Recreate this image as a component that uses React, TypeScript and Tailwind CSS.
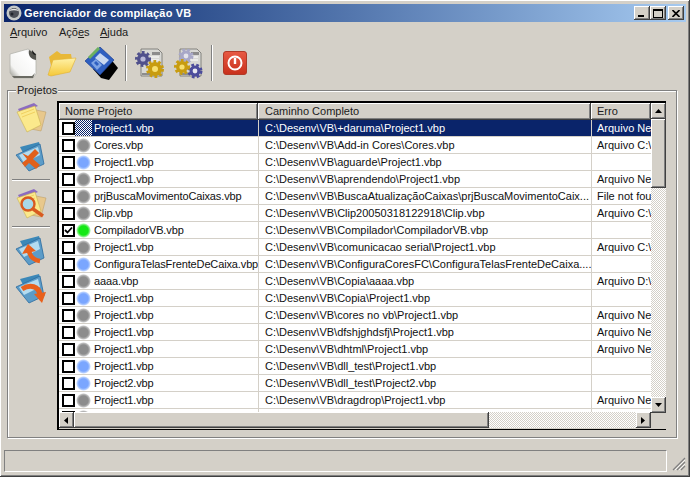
import { ReactNode } from "react";

const raised =
  "bg-[#d4d0c8] shadow-[inset_-1px_-1px_0_#404040,inset_1px_1px_0_#fff,inset_-2px_-2px_0_#808080]";
const dither =
  "bg-[repeating-conic-gradient(#d4d0c8_0_25%,#fff_0_50%)] bg-[length:2px_2px]";

type Dot = "gray" | "blue" | "green" | "sel";
type Row = { name: string; path: string; erro: string; dot: Dot; checked?: boolean };

const base = "C:\\Desenv\\VB\\";
const rows: Row[] = [
  { name: "Project1.vbp", path: base + "+daruma\\Project1.vbp", erro: "Arquivo Ne", dot: "sel" },
  { name: "Cores.vbp", path: base + "Add-in Cores\\Cores.vbp", erro: "Arquivo C:\\", dot: "gray" },
  { name: "Project1.vbp", path: base + "aguarde\\Project1.vbp", erro: "", dot: "blue" },
  { name: "Project1.vbp", path: base + "aprendendo\\Project1.vbp", erro: "Arquivo Ne", dot: "gray" },
  { name: "prjBuscaMovimentoCaixas.vbp", path: base + "BuscaAtualizaçãoCaixas\\prjBuscaMovimentoCaix...", erro: "File not fou", dot: "gray" },
  { name: "Clip.vbp", path: base + "Clip20050318122918\\Clip.vbp", erro: "Arquivo C:\\", dot: "gray" },
  { name: "CompiladorVB.vbp", path: base + "Compilador\\CompiladorVB.vbp", erro: "", dot: "green", checked: true },
  { name: "Project1.vbp", path: base + "comunicacao serial\\Project1.vbp", erro: "Arquivo C:\\", dot: "gray" },
  { name: "ConfiguraTelasFrenteDeCaixa.vbp", path: base + "ConfiguraCoresFC\\ConfiguraTelasFrenteDeCaixa....", erro: "", dot: "blue" },
  { name: "aaaa.vbp", path: base + "Copia\\aaaa.vbp", erro: "Arquivo D:\\", dot: "gray" },
  { name: "Project1.vbp", path: base + "Copia\\Project1.vbp", erro: "", dot: "blue" },
  { name: "Project1.vbp", path: base + "cores no vb\\Project1.vbp", erro: "Arquivo Ne", dot: "gray" },
  { name: "Project1.vbp", path: base + "dfshjghdsfj\\Project1.vbp", erro: "Arquivo Ne", dot: "gray" },
  { name: "Project1.vbp", path: base + "dhtml\\Project1.vbp", erro: "Arquivo Ne", dot: "gray" },
  { name: "Project1.vbp", path: base + "dll_test\\Project1.vbp", erro: "", dot: "blue" },
  { name: "Project2.vbp", path: base + "dll_test\\Project2.vbp", erro: "", dot: "blue" },
  { name: "Project1.vbp", path: base + "dragdrop\\Project1.vbp", erro: "Arquivo Ne", dot: "gray" },
  { name: "", path: "", erro: "", dot: "gray" },
];

function Gear({ x, y, r, color, hub }: { x: number; y: number; r: number; color: string; hub: string }) {
  return (
    <g>
      <circle cx={x} cy={y} r={r} fill="none" stroke={color} strokeWidth={3} strokeDasharray="2.6 2.2" />
      <circle cx={x} cy={y} r={r - 0.5} fill={color} />
      <circle cx={x} cy={y} r={r * 0.4} fill={hub} />
    </g>
  );
}

function DocIcon() {
  return (
    <svg width="30" height="32" viewBox="0 0 30 32" className="shrink-0">
      <defs>
        <linearGradient id="docg" x1="0" y1="1" x2="1" y2="0">
          <stop offset="0" stopColor="#8f8f86" />
          <stop offset="0.25" stopColor="#f4f4f2" />
          <stop offset="0.75" stopColor="#fff" />
          <stop offset="1" stopColor="#d8d8d8" />
        </linearGradient>
      </defs>
      <path d="M2 7 20 2l8 5v20l-3 4H6L2 26Z" fill="url(#docg)" stroke="#b4b4ac" strokeWidth="0.8" />
      <path d="M21 3c-1 5 1 9 7 10V7Z" fill="#55554f" />
      <path d="M24 3l4 5c-3 0-4-2-4-5Z" fill="#1c1c1c" />
      <path d="M4 29h20l3-3-2 5H6Z" fill="#6a6a62" />
    </svg>
  );
}

function FolderIcon() {
  return (
    <svg width="30" height="27" viewBox="0 0 30 27" className="shrink-0">
      <defs>
        <linearGradient id="foldg" x1="0" y1="0" x2="0" y2="1">
          <stop offset="0" stopColor="#fff2a8" />
          <stop offset="1" stopColor="#f5c838" />
        </linearGradient>
      </defs>
      <path d="M2 7 10 1l4 3 10 0 1 6L6 24Z" fill="#e8b838" />
      <path d="M1 25 6 10l23-2-6 14-19 4Z" fill="url(#foldg)" stroke="#e0b030" strokeWidth="0.6" />
    </svg>
  );
}

function SaveIcon() {
  return (
    <svg width="33" height="33" viewBox="0 0 33 33" className="shrink-0">
      <path d="M8 22 24 10l9 11-9 12-8-2Z" fill="#000" />
      <path d="M0 14 15 0l14 13-14 15Z" fill="#2f5fc0" stroke="#1c3f90" strokeWidth="0.7" />
      <path d="M14 1 4 11" stroke="#6cb060" strokeWidth="3" />
      <path d="M15 6 24 13l-5 5-9-7Z" fill="#c9d8f0" />
      <path d="M6 16l5-4 6 6-5 5Z" fill="#7fa4e4" />
      <path d="M9 16l2-2 3 3-2 2Z" fill="#2f5fc0" />
    </svg>
  );
}

function GearDocIcon({ flip }: { flip?: boolean }) {
  return (
    <svg width="31" height="32" viewBox="0 0 31 32" className="shrink-0">
      <path d="M7 2h17l4 4v23H7Z" fill="#d8d8d4" stroke="#6e6e6a" strokeWidth="0.8" />
      <path d="M18 5h8v3h-8ZM8 26h18v2H8Z" fill="#8c8c8c" />
      <path d="M16 10h9M16 13h9" stroke="#fff" />
      {flip ? (
        <>
          <Gear x={13} y={9} r={6} color="#a8a8c8" hub="#e4e4ec" />
          <Gear x={22} y={24} r={6} color="#4c4c9c" hub="#e8e8f0" />
          <Gear x={9} y={20} r={6.5} color="#c89c10" hub="#f8e070" />
        </>
      ) : (
        <>
          <Gear x={9} y={12} r={6.5} color="#50508c" hub="#b8b8d8" />
          <Gear x={21} y={22} r={7.5} color="#c89c10" hub="#f8e070" />
        </>
      )}
    </svg>
  );
}

function PowerIcon() {
  return (
    <svg width="24" height="24" viewBox="0 0 24 24" className="shrink-0">
      <defs>
        <linearGradient id="powg" x1="0" y1="0" x2="0" y2="1">
          <stop offset="0" stopColor="#e85a44" />
          <stop offset="1" stopColor="#c8301c" />
        </linearGradient>
      </defs>
      <rect x="0.5" y="0.5" width="23" height="23" rx="2.5" fill="url(#powg)" stroke="#b03a28" />
      <circle cx="12" cy="12" r="6.5" fill="none" stroke="#fff" strokeWidth="2" />
      <path d="M12 7v6" stroke="#fff" strokeWidth="2.4" />
    </svg>
  );
}

function Sheets({ children }: { children?: ReactNode }) {
  return (
    <svg width="32" height="30" viewBox="0 0 32 30" className="shrink-0 block">
      <path d="M16 6 31 9l-5 19-10-2Z" fill="#e8c88c" stroke="#b89860" strokeWidth="0.5" />
      <path d="M3 6 19 0l4 3-18 7Z" fill="#8c6cc0" />
      <path d="M2 9 20 3l6 19-14 7Z" fill="#fbe98c" stroke="#c8b050" strokeWidth="0.6" />
      <path d="M6 11 19 6M7 14 20 9" stroke="#f0d060" />
      {children}
    </svg>
  );
}

function BlueSheets({ children }: { children?: ReactNode }) {
  return (
    <svg width="32" height="30" viewBox="0 0 32 30" className="shrink-0 block">
      <path d="M5 5 24 0l4 18-12 8Z" fill="#3c88b8" />
      <path d="M1 13 25 2l4 20-15 7Z" fill="#5c9cc8" stroke="#2c6ca0" strokeWidth="0.8" />
      <path d="M4 13 23 5l2 8-16 8Z" fill="#b4dcf0" />
      {children}
    </svg>
  );
}

function TitleIcon() {
  return (
    <svg width="16" height="16" viewBox="0 0 16 16" className="shrink-0">
      <circle cx="8" cy="8" r="7.5" fill="#c4c8c8" />
      <circle cx="8" cy="8" r="5" fill="#4c5058" />
      <path d="M3 6c3-3 7-3 10 0-3-1-7-1-10 0Z" fill="#e8e8e8" />
      <circle cx="6" cy="9" r="1.5" fill="#20242c" />
    </svg>
  );
}

function Triangle({ dir }: { dir: "up" | "down" | "left" | "right" }) {
  const pts = {
    up: "0,4 7,4 3.5,0",
    down: "0,0 7,0 3.5,4",
    left: "4,0 4,7 0,3.5",
    right: "0,0 0,7 4,3.5",
  }[dir];
  return (
    <svg width="7" height="7" viewBox="0 0 7 7" className={dir === "up" || dir === "down" ? "translate-y-[1px]" : "translate-x-[1px]"}>
      <polygon points={pts} fill="#000" />
    </svg>
  );
}

function ScrollButton({ dir }: { dir: "up" | "down" | "left" | "right" }) {
  return (
    <div className={`${raised} w-[15px] h-[16px] shrink-0 flex items-center justify-center`}>
      <Triangle dir={dir} />
    </div>
  );
}

function CaptionButton({ children, className }: { children: ReactNode; className?: string }) {
  return (
    <div className={`${raised} w-[16px] h-[14px] flex items-center justify-center ${className ?? ""}`}>
      {children}
    </div>
  );
}

function StatusDot({ dot }: { dot: Dot }) {
  if (dot === "sel") {
    return (
      <div className="w-[17px] h-[16px] shrink-0 bg-[repeating-conic-gradient(#0a246a_0_25%,#fff_0_50%)] bg-[length:2px_2px]" />
    );
  }
  const color =
    dot === "green"
      ? "bg-[radial-gradient(circle_closest-side,#14e814_62%,#8cee8c_84%,#fff_100%)]"
      : dot === "blue"
        ? "bg-[radial-gradient(circle_closest-side,#7aa6ff_62%,#b4ceff_84%,#fff_100%)]"
        : "bg-[radial-gradient(circle_closest-side,#8c8c8c_62%,#bcbcbc_84%,#fff_100%)]";
  return (
    <div className="w-[17px] h-[16px] shrink-0 flex items-center justify-center">
      <div className={`w-[15px] h-[15px] rounded-full ${color}`} />
    </div>
  );
}

function ListRow({ row, selected }: { row: Row; selected: boolean }) {
  const cell = selected ? "bg-[#0a246a] text-white" : "text-[#101010]";
  return (
    <div className="grid grid-cols-[199px_333px_60px] h-[17px] shrink-0 border-b border-[#d4d0c8]">
      <div className="flex items-center pl-[3px] overflow-hidden">
        <div className="w-[13px] h-[13px] shrink-0 bg-white border-2 border-black flex items-center justify-center">
          {row.checked && (
            <svg width="9" height="9" viewBox="0 0 9 9">
              <path d="M1 4l2.5 2.5L8 1.5" fill="none" stroke="#000" strokeWidth="1.8" />
            </svg>
          )}
        </div>
        <StatusDot dot={row.dot} />
        <div className={`pl-[2px] grow h-full leading-[16px] tracking-[-0.13px] whitespace-nowrap overflow-hidden ${cell}`}>{row.name}</div>
      </div>
      <div className={`pl-[6px] leading-[16px] whitespace-nowrap overflow-hidden border-l border-[#d4d0c8] ${cell}`}>{row.path}</div>
      <div className={`pl-[5px] leading-[16px] whitespace-nowrap overflow-hidden border-l border-[#d4d0c8] ${cell}`}>{row.erro}</div>
    </div>
  );
}

function HeaderCell({ label, className }: { label: string; className: string }) {
  return <div className={`${raised} ${className} h-[17px] leading-[16px] text-[#202020] whitespace-nowrap overflow-hidden`}>{label}</div>;
}

function Separator({ className }: { className: string }) {
  return <div className={`w-[2px] h-[36px] shrink-0 bg-[#808080] border-r border-white ${className}`} />;
}

function SideRule({ className }: { className: string }) {
  return <div className={`w-[38px] h-[2px] shrink-0 bg-[#808080] border-b border-white ${className}`} />;
}

export default function App() {
  return (
    <div className="w-[690px] h-[477px] overflow-hidden flex flex-col p-[4px] bg-[#d4d0c8] text-[11px] text-black font-['Liberation_Sans',Arial,sans-serif] shadow-[inset_-1px_-1px_0_#404040,inset_1px_1px_0_#fff,inset_-2px_-2px_0_#808080]">
      <div className="h-[18px] shrink-0 flex items-center pl-[2px] pr-[2px] bg-gradient-to-r from-[#0a246a] to-[#a6caf0]">
        <TitleIcon />
        <span className="ml-[2px] text-white font-bold text-[11px] tracking-[0.17px]">Gerenciador de compilação VB</span>
        <div className="ml-auto flex items-center">
          <CaptionButton>
            <div className="w-[6px] h-[2px] bg-black mt-[6px] -ml-[2px]" />
          </CaptionButton>
          <CaptionButton>
            <div className="w-[10px] h-[9px] border border-black border-t-2" />
          </CaptionButton>
          <CaptionButton className="ml-[2px]">
            <svg width="8" height="7" viewBox="0 0 8 7">
              <path d="M0.5 0 7.5 7M7.5 0 0.5 7" stroke="#000" strokeWidth="1.6" />
            </svg>
          </CaptionButton>
        </div>
      </div>

      <div className="h-[20px] shrink-0 flex items-center pl-[6px] text-[11px] text-[#202020]">
        <span className="w-[49px]"><span className="underline">A</span>rquivo</span>
        <span className="w-[41px]">Açõ<span className="underline">e</span>s</span>
        <span><span className="underline">A</span>juda</span>
      </div>

      <div className="h-[42px] shrink-0 flex items-center pl-[4px]">
        <DocIcon />
        <div className="ml-[9px]"><FolderIcon /></div>
        <div className="ml-[8px]"><SaveIcon /></div>
        <Separator className="ml-[7px]" />
        <div className="ml-[7px]"><GearDocIcon /></div>
        <div className="ml-[8px]"><GearDocIcon flip /></div>
        <Separator className="ml-[7px]" />
        <div className="ml-[10px]"><PowerIcon /></div>
      </div>

      <fieldset className="ml-[3px] w-[670px] h-[354px] shrink-0 border border-[#808080] shadow-[inset_1px_1px_0_#fff,1px_1px_0_#fff]">
        <legend className="ml-[8px] px-[1px] h-[13px] leading-[13px] bg-[#d4d0c8] text-[#202020]">Projetos</legend>
        <div className="flex pt-[4px]">
          <div className="w-[49px] shrink-0 flex flex-col items-center pt-[2px] pr-[3px]">
            <Sheets />
            <div className="mt-[9px]">
              <BlueSheets>
                <path d="M7 11 13 14 20 7 24 11 18 17 25 23 21 27 14 21 10 25 7 21 12 17Z" fill="#e0601c" />
              </BlueSheets>
            </div>
            <SideRule className="mt-[7px]" />
            <div className="mt-[8px]">
              <Sheets>
                <circle cx="13" cy="15" r="6.5" fill="#a8d8e8" stroke="#d85a20" strokeWidth="2.4" />
                <path d="M18 20 28 27" stroke="#d85a20" strokeWidth="3.4" />
              </Sheets>
            </div>
            <SideRule className="mt-[7px]" />
            <div className="mt-[8px]">
              <BlueSheets>
                <path d="M25 25C18 24 15 20 14 15" fill="none" stroke="#e8601c" strokeWidth="4.5" />
                <path d="M7 18 13 8 21 15Z" fill="#e8601c" />
              </BlueSheets>
            </div>
            <div className="mt-[8px]">
              <BlueSheets>
                <path d="M7 15C15 10 24 12 25 21" fill="none" stroke="#e8601c" strokeWidth="5" />
                <path d="M19 20 31 18 27 29Z" fill="#e8601c" />
              </BlueSheets>
            </div>
          </div>

          <div className="w-[609px] h-[329px] shrink-0 flex border-l-2 border-t-2 border-r border-b border-black">
            <div className="w-[592px] shrink-0 flex flex-col">
              <div className="grid grid-cols-[199px_333px_60px] shrink-0">
                <HeaderCell label="Nome Projeto" className="pl-[6px]" />
                <HeaderCell label="Caminho Completo" className="pl-[7px]" />
                <HeaderCell label="Erro" className="pl-[6px]" />
              </div>
              <div className="h-[292px] shrink-0 overflow-hidden flex flex-col bg-white">
                {rows.map((row, i) => (
                  <ListRow key={i} row={row} selected={i === 0} />
                ))}
              </div>
              <div className={`h-[16px] shrink-0 flex ${dither}`}>
                <ScrollButton dir="left" />
                <div className={`${raised} w-[415px] h-[16px]`} />
                <div className="ml-auto"><ScrollButton dir="right" /></div>
              </div>
            </div>
            <div className="w-[15px] shrink-0 flex flex-col">
              <ScrollButton dir="up" />
              <div className={`${raised} w-[15px] h-[69px] shrink-0`} />
              <div className={`grow ${dither}`} />
              <ScrollButton dir="down" />
              <div className="h-[16px] shrink-0 bg-[#d4d0c8]" />
            </div>
          </div>
        </div>
      </fieldset>

      <div className="mt-[12px] h-[22px] shrink-0 flex">
        <div className="w-[663px] h-full border border-[#808080] border-r-white border-b-white" />
        <svg width="19" height="22" viewBox="0 0 19 22" className="shrink-0">
          <path d="M18 8 6 20M18 12 10 20M18 16 14 20" stroke="#808080" strokeWidth="1.2" />
          <path d="M18 10 8 20M18 14 12 20" stroke="#fff" strokeWidth="0.8" />
        </svg>
      </div>
    </div>
  );
}
